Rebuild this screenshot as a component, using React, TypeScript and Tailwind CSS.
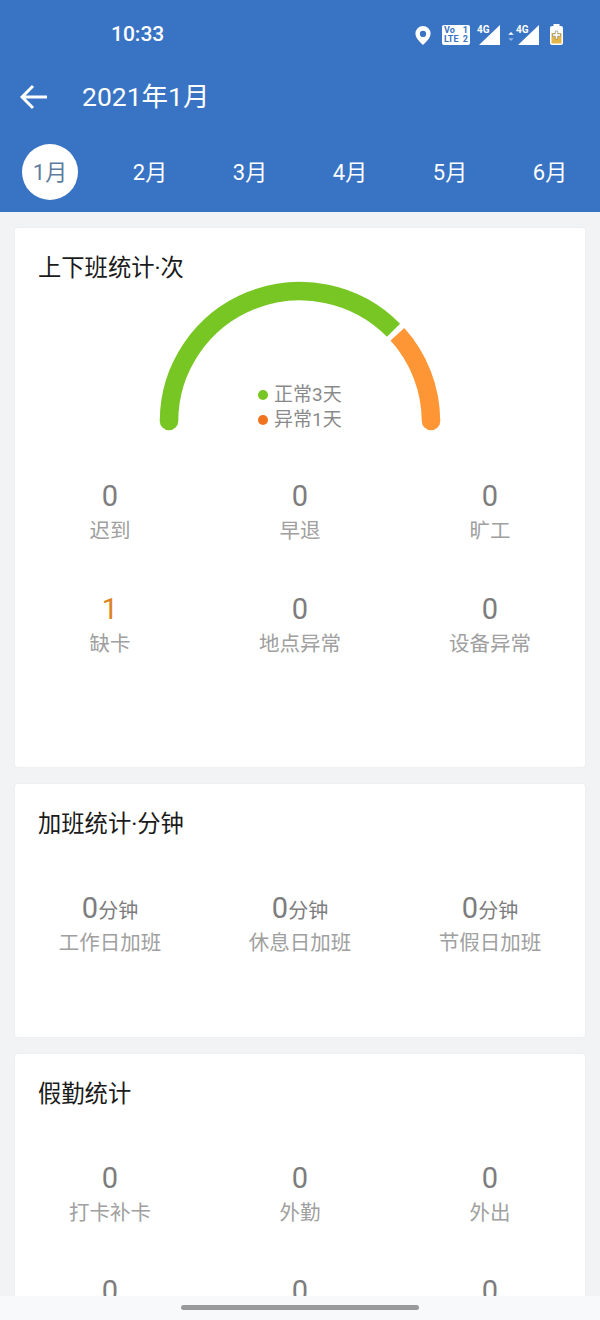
const FONT = 'font-["Roboto","Noto_Sans_CJK_SC",sans-serif]';

const months = ['1月', '2月', '3月', '4月', '5月', '6月'];

function Stat({ value, label, orange }: { value: string; label?: string; orange?: boolean }) {
  return (
    <div className="flex flex-col items-center">
      <div className={`h-[34px] text-[29px] leading-[34px] ${orange ? 'text-[#dd8420]' : 'text-[#7d7d7d]'}`}>{value}</div>
      {label && <div className="mt-[3px] h-[30px] text-[20.5px] leading-[30px] text-[#a0a0a0]">{label}</div>}
    </div>
  );
}

function MinuteStat({ label }: { label: string }) {
  return (
    <div className="flex flex-col items-center">
      <div className="flex h-[34px] items-baseline leading-[34px] text-[#7d7d7d]">
        <span className="text-[29px]">0</span>
        <span className="text-[20px]">分钟</span>
      </div>
      <div className="mt-[3px] h-[30px] text-[20.5px] leading-[30px] text-[#a0a0a0]">{label}</div>
    </div>
  );
}

function Gauge() {
  return (
    <div className="relative mx-auto -mt-[3px] h-[156px] w-[290px]">
      <svg width="290" height="156" viewBox="0 0 290 156" className="block">
        <path d="M14 141 A131 130.500 0 0 1 238.500 50.200" fill="none" stroke="#77c623" strokeWidth="18.500" />
        <circle cx="14" cy="141" r="9.250" fill="#77c623" />
        <path d="M242.400 54.300 A131 130.500 0 0 1 276 141" fill="none" stroke="#ff9635" strokeWidth="18.500" />
        <circle cx="276" cy="141" r="9.250" fill="#ff9635" />
      </svg>
      <div className="absolute left-[103px] top-[102px] flex flex-col text-[19px] leading-[25px] text-[#8a8a8a]">
        <div className="flex items-center gap-[6px]">
          <span className="h-[10px] w-[10px] rounded-full bg-[#77c623]" />
          正常3天
        </div>
        <div className="flex items-center gap-[6px]">
          <span className="h-[10px] w-[10px] rounded-full bg-[#f0731e]" />
          异常1天
        </div>
      </div>
    </div>
  );
}

function Signal() {
  return (
    <div className="relative h-[20px] w-[22px]">
      <svg width="22" height="20" viewBox="0 0 22 20" className="absolute inset-0">
        <path d="M22 0v20H1z" fill="#fff" />
      </svg>
      <span className="absolute -left-[1px] -top-[1px] text-[10px] font-bold leading-[11px] text-white">4G</span>
    </div>
  );
}

function StatusIcons() {
  return (
    <div className="flex items-center text-white">
      {/* location pin */}
      <svg width="16" height="19" viewBox="0 0 16 20" className="mr-[11px] mt-[2px]">
        <path fillRule="evenodd" fill="#fff" d="M8 0a8 8 0 0 1 8 8c0 4.500-4.600 8.800-8 12C4.600 16.800 0 12.500 0 8a8 8 0 0 1 8-8zm0 5a3.300 3.300 0 1 0 0 6.600A3.300 3.300 0 0 0 8 5z" />
      </svg>
      {/* VoLTE badge */}
      <div className="mr-[8px] flex h-[20px] w-[28px] flex-col justify-center rounded-[2px] bg-white px-[2px] text-[9px] font-bold leading-[9px] text-[#3873c4]">
        <div className="flex justify-between">
          <span>Vo</span>
          <span>1</span>
        </div>
        <div className="flex justify-between">
          <span>LTE</span>
          <span>2</span>
        </div>
      </div>
      <Signal />
      {/* data arrows */}
      <svg width="8" height="11" viewBox="0 0 8 12" className="ml-[7px] mr-[2px] mt-[3px]">
        <path d="M4 1l3 3H1z" fill="#fff" />
        <path d="M4 11L1 8h6z" fill="#8fb4e4" />
      </svg>
      <Signal />
      {/* battery */}
      <svg width="15" height="22" viewBox="0 0 15 22" className="ml-[10px]">
        <rect x="4.500" y="0" width="6" height="2" fill="#fff" />
        <rect x="1" y="2" width="13" height="19" rx="2" fill="#fff" />
        <rect x="2.500" y="9" width="10" height="10.500" fill="#e3b64a" />
        <path d="M6.300 7h2.400v2.800h2.800v2.400H8.700V15H6.300v-2.800H3.500V9.800h2.800z" fill="#fff" stroke="#6b6b4a" strokeWidth="0.500" />
      </svg>
    </div>
  );
}

export default function App() {
  return (
    <div className={`relative h-[1320px] w-[600px] overflow-hidden bg-[#f1f3f5] ${FONT}`}>
      <header className="h-[212px] bg-[#3873c4] text-white">
        <div className="flex h-[69px] items-center justify-between pl-[111px] pr-[36px]">
          <span className="text-[21px] font-medium">10:33</span>
          <StatusIcons />
        </div>
        <div className="flex h-[56px] items-center pl-[20px]">
          <svg width="28" height="26" viewBox="0 0 28 26" fill="none" stroke="#fff" strokeWidth="3" className="mr-[34px]">
            <path d="M27 13H3M13 2L2 13l11 11" />
          </svg>
          <span className="text-[26.500px]">2021年1月</span>
        </div>
        <nav className="mt-[19px] grid grid-cols-6">
          {months.map((m, i) => (
            <div key={m} className="flex h-[56px] items-center justify-center">
              <span
                className={
                  i === 0
                    ? 'flex h-[56px] w-[56px] items-center justify-center rounded-full bg-white text-[22px] text-[#5d7c9e]'
                    : 'text-[22px] text-white'
                }
              >
                {m}
              </span>
            </div>
          ))}
        </nav>
      </header>

      <main className="flex flex-col gap-[17px] px-[15px] pt-[16px]">
        <section className="h-[539px] rounded-[3px] bg-white shadow-[0_0_3px_rgba(0,0,0,0.05)]">
          <h2 className="pl-[23px] pt-[25px] text-[23.300px] leading-[30px] text-[#1a1a1a]">上下班统计·次</h2>
          <Gauge />
          <div className="mt-[43px] grid grid-cols-3 gap-y-[46px]">
            <Stat value="0" label="迟到" />
            <Stat value="0" label="早退" />
            <Stat value="0" label="旷工" />
            <Stat value="1" label="缺卡" orange />
            <Stat value="0" label="地点异常" />
            <Stat value="0" label="设备异常" />
          </div>
        </section>

        <section className="h-[253px] rounded-[3px] bg-white shadow-[0_0_3px_rgba(0,0,0,0.05)]">
          <h2 className="pl-[23px] pt-[25px] text-[23.300px] leading-[30px] text-[#1a1a1a]">加班统计·分钟</h2>
          <div className="mt-[52px] grid grid-cols-3">
            <MinuteStat label="工作日加班" />
            <MinuteStat label="休息日加班" />
            <MinuteStat label="节假日加班" />
          </div>
        </section>

        <section className="h-[300px] rounded-[3px] bg-white shadow-[0_0_3px_rgba(0,0,0,0.05)]">
          <h2 className="pl-[23px] pt-[25px] text-[23.300px] leading-[30px] text-[#1a1a1a]">假勤统计</h2>
          <div className="mt-[52px] grid grid-cols-3 gap-y-[46px]">
            <Stat value="0" label="打卡补卡" />
            <Stat value="0" label="外勤" />
            <Stat value="0" label="外出" />
            <Stat value="0" />
            <Stat value="0" />
            <Stat value="0" />
          </div>
        </section>
      </main>

      {/* gesture bar overlays the scrolled content */}
      <div className="absolute inset-x-0 bottom-0 flex h-[24px] justify-center bg-[#f8f9fa] pt-[9px]">
        <div className="h-[5px] w-[238px] rounded-full bg-[#9a9a9a]" />
      </div>
    </div>
  );
}
